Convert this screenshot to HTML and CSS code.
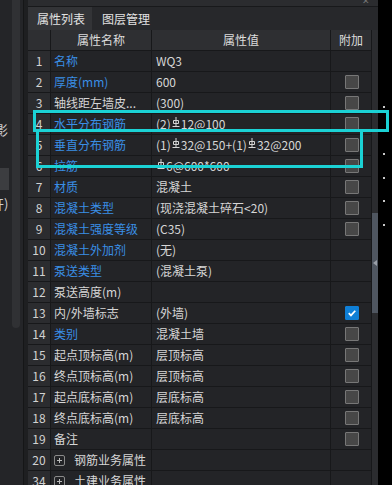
FILE: index.html
```html
<!DOCTYPE html>
<html lang="zh">
<head>
<meta charset="utf-8">
<link rel="stylesheet" href="styles.css">
</head>
<body>
<div class="app">
  <aside class="side">
    <div class="side-track"></div>
    <div class="side-content">
      <div class="side-txt t1">阴影</div>
      <div class="side-block"></div>
      <div class="side-txt t2">打开)</div>
    </div>
  </aside>
  <div class="sep"></div>
  <main class="panel">
    <div class="topstrip"><span class="close">✕</span></div>
    <div class="tabs">
      <div class="tab active">属性列表</div>
      <div class="tab">图层管理</div>
    </div>
    <div class="body">
      <div class="grid">
        <div class="hc"></div><div class="hc">属性名称</div><div class="hc">属性值</div><div class="hc">附加</div>

        <div class="ix">1</div><div class="nm blue">名称</div><div class="vl">WQ3</div><div class="ad"></div>
        <div class="ix">2</div><div class="nm blue">厚度(mm)</div><div class="vl">600</div><div class="ad"><i class="cb"></i></div>
        <div class="ix">3</div><div class="nm">轴线距左墙皮...</div><div class="vl">(300)</div><div class="ad"><i class="cb"></i></div>
        <div class="ix">4</div><div class="nm blue">水平分布钢筋</div><div class="vl">(2)<svg class="rb" viewBox="0 0 8 10"><path d="M4 0V9.5M1.5 3.5h5v3h-5zM0.5 9.5h7"/></svg>12@100</div><div class="ad"><i class="cb"></i></div>
        <div class="ix">5</div><div class="nm blue">垂直分布钢筋</div><div class="vl">(1)<svg class="rb" viewBox="0 0 8 10"><path d="M4 0V9.5M1.5 3.5h5v3h-5zM0.5 9.5h7"/></svg>32@150+(1)<svg class="rb" viewBox="0 0 8 10"><path d="M4 0V9.5M1.5 3.5h5v3h-5zM0.5 9.5h7"/></svg>32@200</div><div class="ad"><i class="cb"></i></div>
        <div class="ix">6</div><div class="nm blue">拉筋</div><div class="vl"><svg class="rb" viewBox="0 0 8 10"><path d="M4 0V9.5M1.5 3.5h5v3h-5zM0.5 9.5h7"/></svg>6@600*600</div><div class="ad"><i class="cb"></i></div>
        <div class="ix">7</div><div class="nm blue">材质</div><div class="vl">混凝土</div><div class="ad"><i class="cb"></i></div>
        <div class="ix">8</div><div class="nm blue">混凝土类型</div><div class="vl">(现浇混凝土碎石&lt;20)</div><div class="ad"><i class="cb"></i></div>
        <div class="ix">9</div><div class="nm blue">混凝土强度等级</div><div class="vl">(C35)</div><div class="ad"><i class="cb"></i></div>
        <div class="ix">10</div><div class="nm blue">混凝土外加剂</div><div class="vl">(无)</div><div class="ad"></div>
        <div class="ix">11</div><div class="nm blue">泵送类型</div><div class="vl">(混凝土泵)</div><div class="ad"></div>
        <div class="ix">12</div><div class="nm">泵送高度(m)</div><div class="vl"></div><div class="ad"></div>
        <div class="ix">13</div><div class="nm">内/外墙标志</div><div class="vl">(外墙)</div><div class="ad"><i class="cb on"><svg viewBox="0 0 14 14"><path d="M3.2 7.2l2.6 2.6 5-5.4"/></svg></i></div>
        <div class="ix">14</div><div class="nm blue">类别</div><div class="vl">混凝土墙</div><div class="ad"><i class="cb"></i></div>
        <div class="ix">15</div><div class="nm">起点顶标高(m)</div><div class="vl">层顶标高</div><div class="ad"><i class="cb"></i></div>
        <div class="ix">16</div><div class="nm">终点顶标高(m)</div><div class="vl">层顶标高</div><div class="ad"><i class="cb"></i></div>
        <div class="ix">17</div><div class="nm">起点底标高(m)</div><div class="vl">层底标高</div><div class="ad"><i class="cb"></i></div>
        <div class="ix">18</div><div class="nm">终点底标高(m)</div><div class="vl">层底标高</div><div class="ad"><i class="cb"></i></div>
        <div class="ix">19</div><div class="nm">备注</div><div class="vl"></div><div class="ad"><i class="cb"></i></div>
        <div class="ix">20</div><div class="nm grp"><i class="plus"></i>钢筋业务属性</div><div class="vl"></div><div class="ad"></div>
        <div class="ix">34</div><div class="nm grp"><i class="plus"></i>土建业务属性</div><div class="vl"></div><div class="ad"></div>
      </div>
      <div class="vscroll">
        <div class="thumb"></div>
        <div class="arrow"></div>
      </div>
    </div>
  </main>
  <div class="outer">
    <i class="dot"></i><i class="dot"></i><i class="dot"></i><i class="dot"></i><i class="dot"></i><i class="dot"></i>
  </div>
</div>
<div class="hl hl1"></div>
<div class="hl hl2"></div>
</body>
</html>
```
FILE: styles.css
```css
* { box-sizing: border-box; }
html, body {
  margin: 0;
  padding: 0;
  background: #000;
  width: 392px;
  height: 485px;
  overflow: hidden;
  font-family: "Noto Sans CJK SC", "Noto Sans", sans-serif;
  font-size: 12px;
  color: #d6d6d6;
}
.app {
  display: flex;
  height: 485px;
}
.side {
  width: 23px;
  background: #242528;
  position: relative;
  overflow: hidden;
  display: flex;
}
.side-track {
  position: absolute;
  left: 12px;
  top: 0;
  width: 8px;
  height: 328px;
  background: #303134;
  border-radius: 0 0 4px 4px;
}
.side-content {
  display: flex;
  flex-direction: column;
  padding-top: 121px;
  width: 23px;
}
.side-txt {
  width: 30px;
  margin-left: -22px;
  font-size: 13px;
  line-height: 18px;
  color: #cfcfcf;
  white-space: nowrap;
  text-align: right;
  position: relative;
  z-index: 1;
}
.side-block {
  margin-top: 29px;
  width: 9px;
  height: 22px;
  background: #3c3d40;
  position: relative;
  z-index: 1;
}
.side-txt.t2 { margin-top: 5px; width: 28px; }
.sep {
  width: 5px;
  background: #1e1f21;
  border-left: 1px solid #151617;
}
.panel {
  width: 350px;
  display: flex;
  flex-direction: column;
  background: #232427;
}
.topstrip {
  height: 7px;
  background: #2b2c2f;
  border-bottom: 1px solid #18191b;
  position: relative;
  overflow: hidden;
}
.close {
  position: absolute;
  right: 8px;
  top: -6px;
  font-size: 9px;
  color: #777;
}
.tabs {
  height: 23px;
  display: flex;
  background: #27282b;
}
.tab {
  padding: 0 8px 0 10px;
  line-height: 23px;
  font-size: 12px;
  color: #e2e2e2;
  white-space: nowrap;
}
.tab.active {
  background: #333437;
  padding: 0 7px 0 9px;
}
.grid {
  width: 344px;
  display: grid;
  grid-template-columns: 22px 100px 178px 40px;
  grid-auto-rows: 20px;
  gap: 1px;
  background: #17181a;
  border-right: 1px solid #17181a;
  align-content: start;
}
.body {
  display: flex;
  flex: 1;
  overflow: hidden;
}
.grid > div {
  background: #232427;
  line-height: 20px;
  white-space: nowrap;
  overflow: hidden;
}
.grid > .hc {
  background: #2e2f32;
  text-align: center;
  color: #dcdcdc;
}
.grid > .ix {
  background: #2b2c2f;
  text-align: center;
  color: #d2d2d2;
}
.nm { padding-left: 3px; }
.nm.blue { color: #3a8fe6; }
.vl { padding-left: 4px; display: flex; align-items: center; }
.ad { display: flex; align-items: center; justify-content: center; padding-left: 1px; }
.cb {
  width: 14px;
  height: 14px;
  background: #474747;
  border: 1px solid #777;
  border-radius: 1px;
  display: block;
}
.cb.on {
  background: #0f7fd6;
  border-color: #0f7fd6;
}
.cb.on svg {
  display: block;
  width: 12px;
  height: 12px;
}
.cb.on path {
  fill: none;
  stroke: #fff;
  stroke-width: 2;
}
.rb {
  width: 8px;
  height: 10px;
  margin: 0 1px;
  position: relative;
  top: -2px;
}
.rb path {
  fill: none;
  stroke: #d6d6d6;
  stroke-width: 1;
}
.grp {
  display: flex;
  align-items: center;
  gap: 9px;
  color: #d6d6d6;
}
.plus {
  width: 11px;
  height: 11px;
  border: 1px solid #8a8a8a;
  border-radius: 2px;
  position: relative;
  display: block;
  flex: none;
}
.plus::before, .plus::after {
  content: "";
  position: absolute;
  background: #bbb;
}
.plus::before { left: 2px; right: 2px; top: 4px; height: 1px; }
.plus::after { top: 2px; bottom: 2px; left: 4px; width: 1px; }
.vscroll {
  width: 6px;
  background: #2b2c2f;
  display: flex;
  flex-direction: column;
  align-items: center;
  padding-top: 183px;
  position: relative;
}
.thumb {
  width: 6px;
  height: 100px;
  background: #4f5660;
}
.arrow {
  position: absolute;
  left: 1px;
  top: 230px;
  width: 0;
  height: 0;
  border-top: 3px solid transparent;
  border-bottom: 3px solid transparent;
  border-right: 4px solid #9aa0a8;
}
.outer {
  flex: 1;
  background: #000;
  display: flex;
  flex-direction: column;
  padding-top: 106px;
  padding-left: 5px;
  gap: 21.6px;
}
.dot {
  display: block;
  width: 2px;
  height: 2px;
  background: #c8c8c8;
}
.hl {
  position: absolute;
  border: 3px solid #1bd2d5;
}
.hl1 { left: 33px; top: 110px; width: 356px; height: 22px; }
.hl2 { left: 36px; top: 129px; width: 327px; height: 39px; }
```
